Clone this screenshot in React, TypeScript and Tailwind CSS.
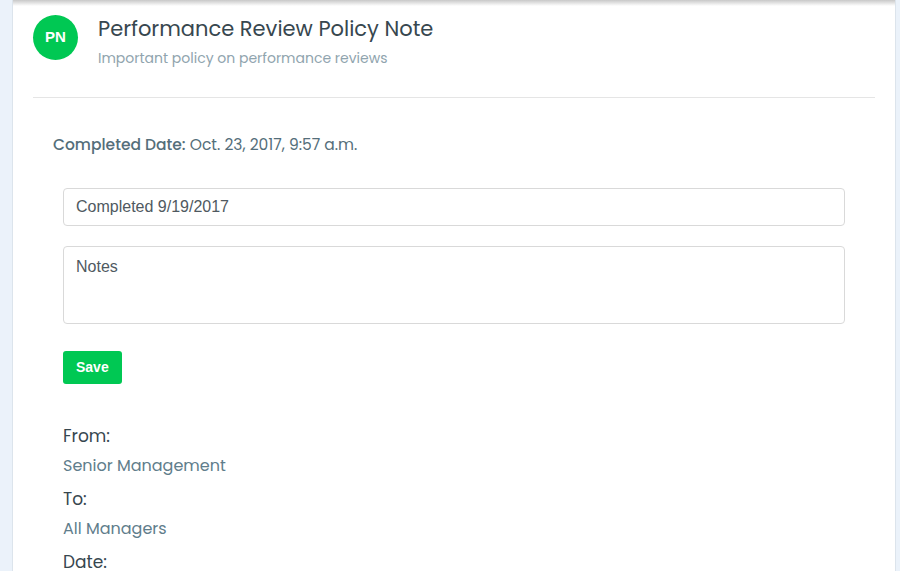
export default function App() {
  const font = { fontFamily: 'Poppins, Inter, "Noto Sans", sans-serif' };
  return (
    <div className="flex h-[571px] w-[900px] overflow-hidden bg-[#ebf2fa]" style={font}>
      <div className="w-[12px] shrink-0" />
      <div className="relative flex-1 border-x border-[#dce4ec] bg-white">
        <div className="pointer-events-none absolute inset-x-0 top-0 h-[6px] bg-gradient-to-b from-[#c8c8c8] to-transparent" />
        <div className="px-[20px]">
          <div className="flex items-start gap-[20px] border-b border-[#e5e5e5] pb-[30px] pt-[15px]">
            <div className="flex h-[45px] w-[45px] shrink-0 items-center justify-center rounded-full bg-[#00c853] text-[15px] font-bold text-white" style={{ fontFamily: '"Liberation Sans", Arial, sans-serif' }}>
              PN
            </div>
            <div className="pt-[1px]">
              <h1 className="text-[21px] leading-[26px] text-[#37474f]">Performance Review Policy Note</h1>
              <p className="mt-[7px] text-[14px] leading-[18px] text-[#90a4ae]">Important policy on performance reviews</p>
            </div>
          </div>
        </div>
        <div className="px-[40px] pt-[36px]">
          <p className="text-[15.5px] leading-[22px] text-[#546e7a]">
            <span className="font-medium">Completed Date:</span> Oct. 23, 2017, 9:57 a.m.
          </p>
          <div className="px-[10px] pt-[32px]" style={{ fontFamily: '"Liberation Sans", Arial, sans-serif' }}>
            <input
              type="text"
              defaultValue="Completed 9/19/2017"
              className="block h-[38px] w-full rounded-[4px] border border-[#d9d9d9] px-[12px] text-[16px] text-[#4f5961] outline-none"
            />
            <textarea
              placeholder="Notes"
              className="mt-[20px] block h-[78px] w-full resize-none rounded-[4px] border border-[#d9d9d9] px-[12px] py-[8px] text-[16px] text-[#4f5961] outline-none placeholder:text-[#4f5961]"
            />
            <button className="mt-[27px] h-[33px] rounded-[3px] bg-[#00c853] px-[13px] text-[14px] font-bold text-white">
              Save
            </button>
          </div>
          <div className="px-[10px] pt-[40px]">
            <h3 className="text-[17px] leading-[24px] text-[#37474f]">From:</h3>
            <p className="mt-[7px] text-[16px] leading-[22px] text-[#607d8b]">Senior Management</p>
            <h3 className="mt-[10px] text-[17px] leading-[24px] text-[#37474f]">To:</h3>
            <p className="mt-[7px] text-[16px] leading-[22px] text-[#607d8b]">All Managers</p>
            <h3 className="mt-[10px] text-[17px] leading-[24px] text-[#37474f]">Date:</h3>
          </div>
        </div>
      </div>
      <div className="w-[4px] shrink-0" />
    </div>
  );
}
